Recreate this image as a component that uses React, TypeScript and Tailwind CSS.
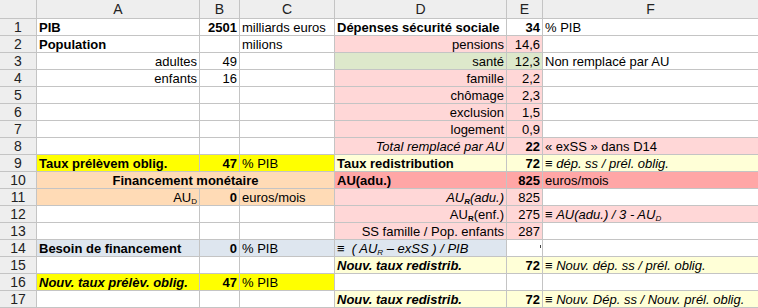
import type { ReactNode } from "react"

type CellDef = {
    t?: ReactNode
    bg?: string
    r?: boolean
    c?: boolean
    b?: boolean
    i?: boolean
    span?: string
}

const PINK = "bg-[#ffd7d7]"
const GREEN = "bg-[#dde8cb]"
const YELLOW = "bg-[#ffff00]"
const LYELLOW = "bg-[#ffffd7]"
const ORANGE = "bg-[#ffdbb6]"
const RED = "bg-[#ffa6a6]"
const BLUE = "bg-[#dee6ef]"

const Sub = ({ children, bold }: { children: ReactNode; bold?: boolean }) => (
    <sub className={`text-[8px] ${bold ? "font-bold" : ""}`}>{children}</sub>
)

const empty: CellDef = {}

const rows: CellDef[][] = [
    [{ t: "PIB", b: true }, { t: "2501", b: true, r: true }, { t: "milliards euros" }, { t: "Dépenses sécurité sociale", b: true }, { t: "34", b: true, r: true }, { t: "% PIB" }],
    [{ t: "Population", b: true }, empty, { t: "milions" }, { t: "pensions", r: true, bg: PINK }, { t: "14,6", r: true, bg: PINK }, empty],
    [{ t: "adultes", r: true }, { t: "49", r: true }, empty, { t: "santé", r: true, bg: GREEN }, { t: "12,3", r: true, bg: GREEN }, { t: "Non remplacé par AU" }],
    [{ t: "enfants", r: true }, { t: "16", r: true }, empty, { t: "famille", r: true, bg: PINK }, { t: "2,2", r: true, bg: PINK }, empty],
    [empty, empty, empty, { t: "chômage", r: true, bg: PINK }, { t: "2,3", r: true, bg: PINK }, empty],
    [empty, empty, empty, { t: "exclusion", r: true, bg: PINK }, { t: "1,5", r: true, bg: PINK }, empty],
    [empty, empty, empty, { t: "logement", r: true, bg: PINK }, { t: "0,9", r: true, bg: PINK }, empty],
    [empty, empty, empty, { t: "Total remplacé par AU", r: true, i: true, bg: PINK }, { t: "22", r: true, b: true, bg: PINK }, { t: "« exSS » dans D14", bg: PINK }],
    [
        { t: "Taux prélèvem oblig.", b: true, bg: YELLOW }, { t: "47", b: true, r: true, bg: YELLOW }, { t: "% PIB", bg: YELLOW },
        { t: "Taux redistribution", b: true, bg: LYELLOW }, { t: "72", b: true, r: true, bg: LYELLOW },
        { t: <>≡ <i>dép. ss / prél. oblig.</i></>, bg: LYELLOW },
    ],
    [
        { t: "Financement monétaire", b: true, c: true, bg: ORANGE, span: "col-span-3" },
        { t: "AU(adu.)", b: true, bg: RED }, { t: "825", b: true, r: true, bg: RED }, { t: "euros/mois", bg: RED },
    ],
    [
        { t: <>AU<Sub>D</Sub></>, r: true, bg: ORANGE }, { t: "0", b: true, r: true, bg: ORANGE }, { t: "euros/mois", bg: ORANGE },
        { t: <>AU<Sub bold>R</Sub>(adu.)</>, r: true, i: true, bg: PINK }, { t: "825", r: true, bg: PINK }, empty,
    ],
    [
        empty, empty, empty,
        { t: <>AU<Sub bold>R</Sub>(enf.)</>, r: true, bg: PINK }, { t: "275", r: true, bg: PINK },
        { t: <>≡ <i>AU(adu.) / 3 - AU<Sub>D</Sub></i></>, bg: PINK },
    ],
    [empty, empty, empty, { t: "SS famille / Pop. enfants", r: true, bg: PINK }, { t: "287", r: true, bg: PINK }, empty],
    [
        { t: "Besoin de financement", b: true, bg: BLUE }, { t: "0", b: true, r: true, bg: BLUE }, { t: "% PIB", bg: BLUE },
        { t: <>≡ &nbsp;<i>( AU<Sub>R</Sub> – exSS ) / PIB</i></>, bg: BLUE },
        { t: <span className="inline-block w-px h-[3px] bg-[#444] mb-[5px] -mr-[2px]" />, r: true }, empty,
    ],
    [
        empty, empty, empty,
        { t: "Nouv. taux redistrib.", b: true, i: true, bg: LYELLOW }, { t: "72", b: true, r: true, bg: LYELLOW },
        { t: <>≡ <i>Nouv. dép. ss / prél. oblig.</i></>, bg: LYELLOW },
    ],
    [
        { t: "Nouv. taux prélèv. oblig.", b: true, i: true, bg: YELLOW }, { t: "47", b: true, r: true, bg: YELLOW }, { t: "% PIB", bg: YELLOW },
        empty, empty, empty,
    ],
    [
        empty, empty, empty,
        { t: "Nouv. taux redistrib.", b: true, i: true, bg: LYELLOW }, { t: "72", b: true, r: true, bg: LYELLOW },
        { t: <>≡ <i>Nouv. Dép. ss / Nouv. prél. oblig.</i></>, bg: LYELLOW },
    ],
]

const Cell = ({ cell }: { cell: CellDef }) => (
    <div
        className={`flex items-end h-[16px] px-[2px] overflow-hidden whitespace-nowrap leading-[15px] text-black
            ${cell.bg ?? "bg-white"} ${cell.span ?? ""}
            ${cell.r ? "justify-end" : cell.c ? "justify-center" : "justify-start"}
            ${cell.b ? "font-bold" : ""} ${cell.i ? "italic" : ""}`}
    >
        <span>{cell.t}</span>
    </div>
)

const Header = ({ children }: { children: ReactNode }) => (
    <div className="flex items-center justify-center bg-[#eeeeee] text-[#222] text-[14px] leading-none">{children}</div>
)

export default function App() {
    const cols = ["A", "B", "C", "D", "E", "F"]
    return (
        <div className="w-[758px] h-[308px] overflow-hidden bg-white" style={{ fontFamily: '"Liberation Sans", Arial, sans-serif' }}>
            <div className="grid grid-cols-[36px_162px_39px_94px_171px_35px_1fr] auto-rows-[16px] grid-rows-[18px] gap-px bg-[#c4c4c4] text-[13px] pb-px">
                <div className="bg-[#eeeeee]"></div>
                {cols.map(c => <Header key={c}>{c}</Header>)}
                {rows.map((row, idx) => (
                    <div key={idx} className="contents">
                        <Header>{idx + 1}</Header>
                        {row.map((cell, j) => <Cell key={j} cell={cell} />)}
                    </div>
                ))}
            </div>
        </div>
    )
}
